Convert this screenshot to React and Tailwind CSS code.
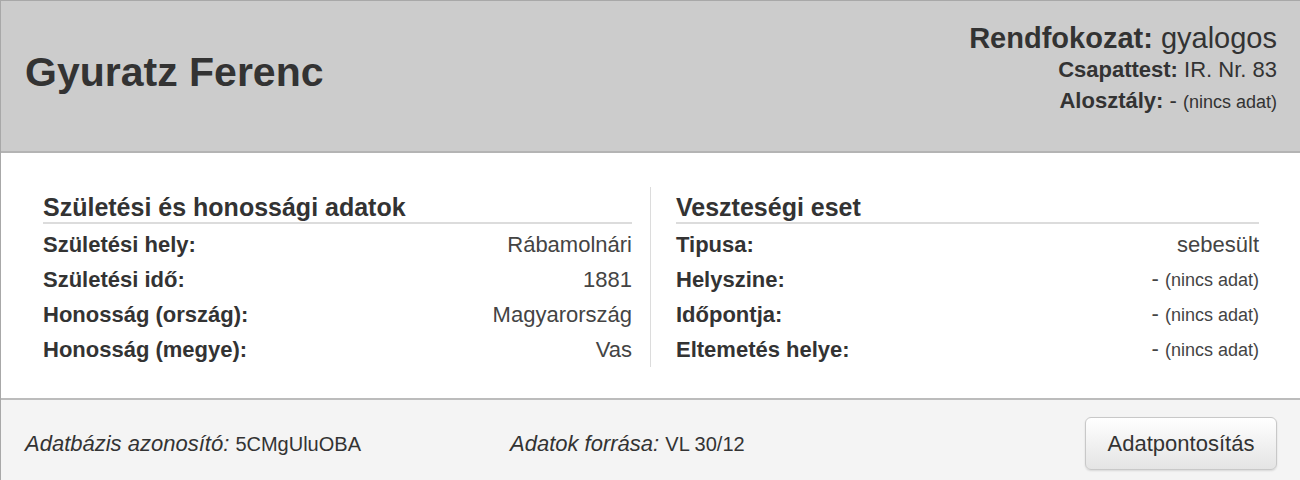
import React from "react";

const BIRTH_ROWS = [
  ["Születési hely:", "Rábamolnári"],
  ["Születési idő:", "1881"],
  ["Honosság (ország):", "Magyarország"],
  ["Honosság (megye):", "Vas"],
];

const LOSS_ROWS = [
  ["Tipusa:", "sebesült"],
  ["Helyszine:", null],
  ["Időpontja:", null],
  ["Eltemetés helye:", null],
];

const NoData = () => (
  <span>
    - <span className="text-[18px]">(nincs adat)</span>
  </span>
);

const Section = ({ title, rows }) => (
  <div>
    <h3 className="pt-[5px] text-[25px] leading-[30px] font-bold text-[#333] border-b-2 border-[#dcdcdc]">
      {title}
    </h3>
    <div className="mt-[3px]">
      {rows.map(([label, value]) => (
        <div key={label} className="flex items-center justify-between h-[35px] text-[22px] leading-[35px]">
          <span className="font-bold text-[#333]">{label}</span>
          <span className="text-[#444]">{value === null ? <NoData /> : value}</span>
        </div>
      ))}
    </div>
  </div>
);

export default function App() {
  return (
    <div className="w-[1300px] h-[480px] overflow-hidden bg-white border-l border-t border-[#a8a8a8] text-[#333] font-['Liberation_Sans',Arial,sans-serif]">
      {/* header */}
      <div className="flex justify-between h-[152px] bg-[#cccccc] border-b-2 border-[#b4b4b4] pl-[24px] pr-[23px]">
        <h1 className="pt-[47px] text-[41px] leading-[48px] font-bold text-[#333]">Gyuratz Ferenc</h1>
        <div className="pt-[22px] text-right text-[#333]">
          <div className="text-[29px] leading-[31px]">
            <span className="font-bold">Rendfokozat:</span> gyalogos
          </div>
          <div className="text-[22px] leading-[31px]">
            <span className="font-bold">Csapattest:</span> IR. Nr. 83
          </div>
          <div className="text-[22px] leading-[31px]">
            <span className="font-bold">Alosztály:</span> <NoData />
          </div>
        </div>
      </div>

      {/* body */}
      <div className="flex pl-[42px] pr-[41px] pt-[34px] pb-[31px]">
        <div className="w-[608px] pr-[18px] border-r border-[#dcdcdc]">
          <Section title="Születési és honossági adatok" rows={BIRTH_ROWS} />
        </div>
        <div className="flex-1 pl-[25px]">
          <Section title="Veszteségi eset" rows={LOSS_ROWS} />
        </div>
      </div>

      {/* footer */}
      <div className="flex items-center bg-[#f4f4f4] border-t-2 border-[#bcbcbc] pl-[24px] pr-[23px] py-[17px] text-[22px] text-[#333]">
        <div className="w-[485px]">
          <i>Adatbázis azonosító:</i> <span className="text-[20px]">5CMgUluOBA</span>
        </div>
        <div className="flex-1">
          <i>Adatok forrása:</i> <span className="text-[20px]">VL 30/12</span>
        </div>
        <button
          type="button"
          className="w-[192px] h-[53px] rounded-[6px] border border-[#c8c8c8] bg-gradient-to-b from-white to-[#e4e4e4] shadow-[0_1px_2px_rgba(0,0,0,0.12)] text-[22px] text-[#333]"
        >
          Adatpontosítás
        </button>
      </div>
    </div>
  );
}
